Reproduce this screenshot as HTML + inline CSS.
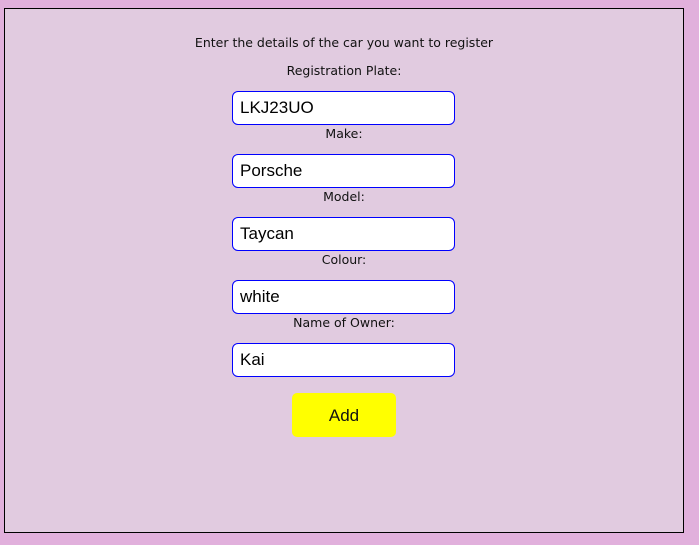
<!DOCTYPE html>
<html><head><style>
html,body{margin:0;padding:0;width:699px;height:545px;background:#e1b0dc;overflow:hidden}
.box{position:absolute;left:4px;top:8px;width:678px;height:523px;border:1px solid #000;background:#e1cbe0}
.t{position:absolute;left:0;width:688px;text-align:center;font:12.5px "DejaVu Sans",sans-serif;color:#111;line-height:16px}
.in{position:absolute;left:232px;border:1px solid #00f;border-radius:6px;background:#fff;font:17px "Liberation Sans",sans-serif;line-height:32px;padding-left:7px;box-sizing:border-box;width:223px;height:34px;color:#000}
.btn{position:absolute;left:292px;top:393px;width:104px;height:44px;background:#ff0;border-radius:5px;font:17px "Liberation Sans",sans-serif;text-align:center;line-height:45px;color:#111}
</style></head><body>
<div class="box"></div>
<div class="t" style="top:35px">Enter the details of the car you want to register</div>
<div class="t" style="top:63px">Registration Plate:</div>
<div class="in" style="top:91px">LKJ23UO</div>
<div class="t" style="top:126px">Make:</div>
<div class="in" style="top:154px">Porsche</div>
<div class="t" style="top:189px">Model:</div>
<div class="in" style="top:217px">Taycan</div>
<div class="t" style="top:252px">Colour:</div>
<div class="in" style="top:280px">white</div>
<div class="t" style="top:315px">Name of Owner:</div>
<div class="in" style="top:343px">Kai</div>
<div class="btn">Add</div>
</body></html>
